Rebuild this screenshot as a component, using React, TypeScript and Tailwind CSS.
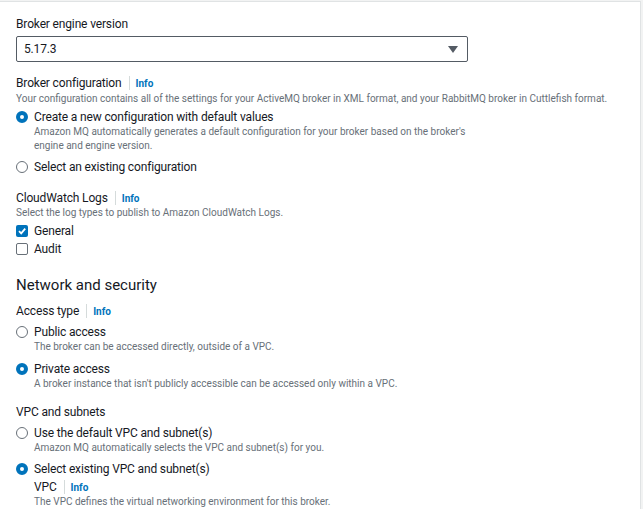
import React from "react";

const font = { fontFamily: "Roboto, 'Liberation Sans', Arial, sans-serif" };

const label = "text-[12px] tracking-[-0.15px] text-[#16191f]";
const desc = "text-[10px] leading-[14px] text-[#687078]";

function Info() {
  return (
    <>
      <span className="ml-[7px] mr-[6px] inline-block h-[14px] w-px bg-[#d5dbdb] align-middle" />
      <span className="text-[10px] font-bold tracking-normal text-[#0073bb]">Info</span>
    </>
  );
}

function Radio({ checked }: { checked?: boolean }) {
  return checked ? (
    <span className="inline-block h-[12px] w-[12px] shrink-0 rounded-full border-[4px] border-[#0073bb] bg-white" />
  ) : (
    <span className="inline-block h-[12px] w-[12px] shrink-0 rounded-full border border-[#687078] bg-white" />
  );
}

function Check({ checked }: { checked?: boolean }) {
  return checked ? (
    <span className="flex h-[12px] w-[12px] shrink-0 items-center justify-center rounded-[2px] bg-[#0073bb]">
      <svg width="10" height="10" viewBox="0 0 10 10">
        <path d="M2 5.2 L4.2 7.4 L8.2 2.6" fill="none" stroke="white" strokeWidth="1.8" />
      </svg>
    </span>
  ) : (
    <span className="inline-block h-[12px] w-[12px] shrink-0 rounded-[2px] border border-[#687078] bg-white" />
  );
}

function Option({
  checked,
  text,
  lines,
  mt,
}: {
  checked?: boolean;
  text: string;
  lines?: string[];
  mt: string;
}) {
  return (
    <div className={mt}>
      <div className="flex h-[16px] items-center">
        <Radio checked={checked} />
        <span className={`ml-[6px] leading-[16px] ${label}`}>{text}</span>
      </div>
      {lines && (
        <div className={`pl-[18px] ${desc}`}>
          {lines.map((d) => (
            <div key={d}>{d}</div>
          ))}
        </div>
      )}
    </div>
  );
}

export default function App() {
  return (
    <div className="h-[509px] w-[643px] overflow-hidden bg-[#f2f3f3]" style={font}>
      <div className="mt-[1px] h-full w-[641px] border-r border-t border-[#e0e3e4] bg-white pl-[16px] pt-[13px]">
        <div className={`leading-[18px] ${label}`}>Broker engine version</div>
        <div className="mt-[3px] flex h-[26px] w-[452px] items-center justify-between rounded-[2px] border border-[#545b64] pl-[7px] pr-[9px]">
          <span className={label}>5.17.3</span>
          <svg width="10" height="7" viewBox="0 0 10 7">
            <path d="M0 0 H10 L5 7 Z" fill="#545b64" />
          </svg>
        </div>

        <div className={`mt-[13px] flex h-[16px] items-center ${label}`}>
          Broker configuration
          <Info />
        </div>
        <div className={`mt-[1px] ${desc}`}>
          Your configuration contains all of the settings for your ActiveMQ broker in XML format, and your RabbitMQ broker in Cuttlefish format.
        </div>
        <Option
          mt="mt-[3px]"
          checked
          text="Create a new configuration with default values"
          lines={[
            "Amazon MQ automatically generates a default configuration for your broker based on the broker's",
            "engine and engine version.",
          ]}
        />
        <Option mt="mt-[6px]" text="Select an existing configuration" />

        <div className={`mt-[15px] flex h-[16px] items-center ${label}`}>
          CloudWatch Logs
          <Info />
        </div>
        <div className={desc}>Select the log types to publish to Amazon CloudWatch Logs.</div>
        <div className="mt-[3px] flex h-[16px] items-center">
          <Check checked />
          <span className={`ml-[6px] ${label}`}>General</span>
        </div>
        <div className="mt-[2px] flex h-[16px] items-center">
          <Check />
          <span className={`ml-[6px] ${label}`}>Audit</span>
        </div>

        <div className="mt-[17px] text-[15px] leading-[22px] text-[#16191f]">Network and security</div>

        <div className={`mt-[7px] flex h-[16px] items-center ${label}`}>
          Access type
          <Info />
        </div>
        <Option
          mt="mt-[5px]"
          text="Public access"
          lines={["The broker can be accessed directly, outside of a VPC."]}
        />
        <Option
          mt="mt-[7px]"
          checked
          text="Private access"
          lines={["A broker instance that isn't publicly accessible can be accessed only within a VPC."]}
        />

        <div className={`mt-[13px] leading-[16px] ${label}`}>VPC and subnets</div>
        <Option
          mt="mt-[5px]"
          text="Use the default VPC and subnet(s)"
          lines={["Amazon MQ automatically selects the VPC and subnet(s) for you."]}
        />
        <Option mt="mt-[6px]" checked text="Select existing VPC and subnet(s)" />
        <div className="pl-[18px]">
          <div className={`mt-[2px] flex h-[16px] items-center ${label}`}>
            VPC
            <Info />
          </div>
          <div className={desc}>The VPC defines the virtual networking environment for this broker.</div>
        </div>
      </div>
    </div>
  );
}
